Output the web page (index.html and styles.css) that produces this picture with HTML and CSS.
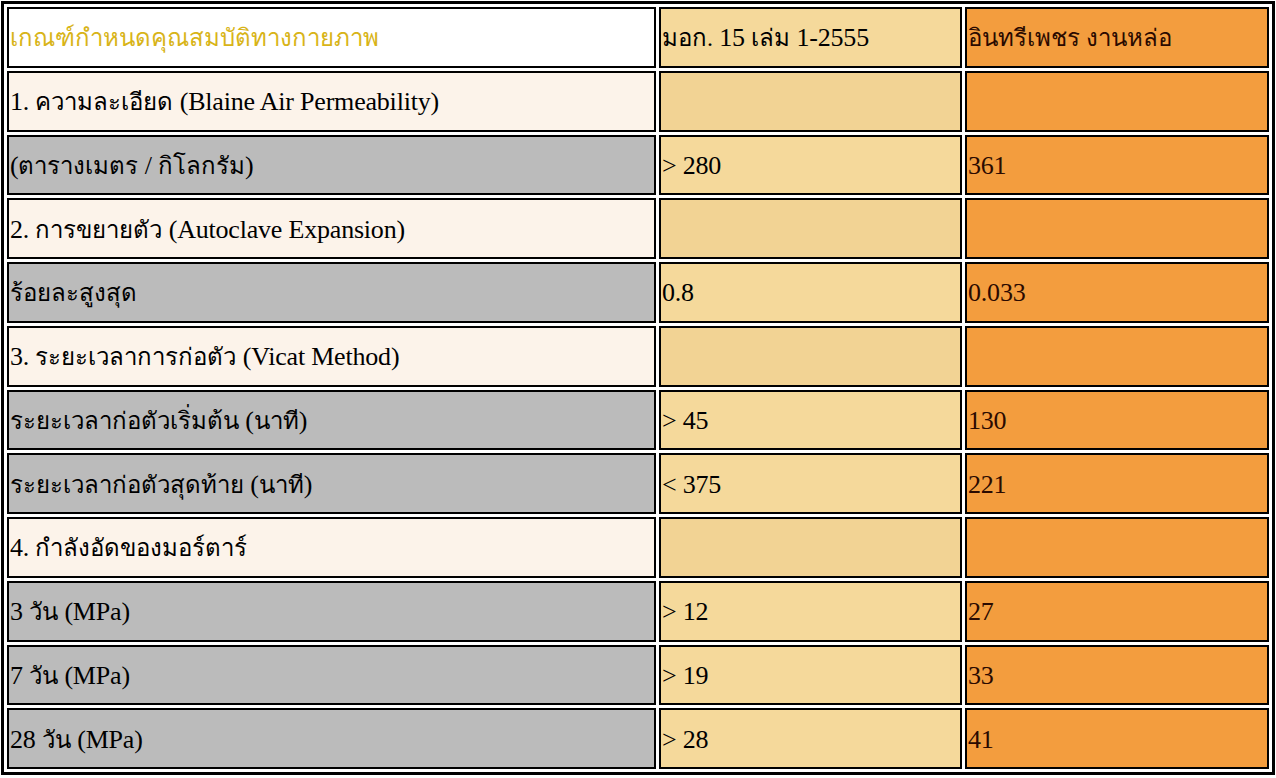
FILE: index.html
```html
<!DOCTYPE html>
<html lang="th">
<head>
<meta charset="utf-8">
<title>เกณฑ์กำหนดคุณสมบัติทางกายภาพ</title>
<link rel="stylesheet" href="styles.css">
</head>
<body>
<table class="spec">
  <colgroup>
    <col class="c1"><col class="c2"><col class="c3">
  </colgroup>
  <tr class="head">
    <td class="name"><span class="th">เกณฑ์กำหนดคุณสมบัติทางกายภาพ</span></td>
    <td class="std"><span class="th">มอก.</span> 15 <span class="th">เล่ม</span> 1-2555</td>
    <td class="val"><span class="th">อินทรีเพชร งานหล่อ</span></td>
  </tr>
  <tr class="section">
    <td class="name">1. <span class="th">ความละเอียด</span> (Blaine Air Permeability)</td>
    <td class="std"></td>
    <td class="val"></td>
  </tr>
  <tr class="data">
    <td class="name">(<span class="th">ตารางเมตร</span> / <span class="th">กิโลกรัม</span>)</td>
    <td class="std">&gt; 280</td>
    <td class="val">361</td>
  </tr>
  <tr class="section">
    <td class="name">2. <span class="th">การขยายตัว</span> (Autoclave Expansion)</td>
    <td class="std"></td>
    <td class="val"></td>
  </tr>
  <tr class="data">
    <td class="name"><span class="th">ร้อยละสูงสุด</span></td>
    <td class="std">0.8</td>
    <td class="val">0.033</td>
  </tr>
  <tr class="section">
    <td class="name">3. <span class="th">ระยะเวลาการก่อตัว</span> (Vicat Method)</td>
    <td class="std"></td>
    <td class="val"></td>
  </tr>
  <tr class="data">
    <td class="name"><span class="th">ระยะเวลาก่อตัวเริ่มต้น</span> (<span class="th">นาที</span>)</td>
    <td class="std">&gt; 45</td>
    <td class="val">130</td>
  </tr>
  <tr class="data">
    <td class="name"><span class="th">ระยะเวลาก่อตัวสุดท้าย</span> (<span class="th">นาที</span>)</td>
    <td class="std">&lt; 375</td>
    <td class="val">221</td>
  </tr>
  <tr class="section">
    <td class="name">4. <span class="th">กำลังอัดของมอร์ตาร์</span></td>
    <td class="std"></td>
    <td class="val"></td>
  </tr>
  <tr class="data">
    <td class="name">3 <span class="th">วัน</span> (MPa)</td>
    <td class="std">&gt; 12</td>
    <td class="val">27</td>
  </tr>
  <tr class="data">
    <td class="name">7 <span class="th">วัน</span> (MPa)</td>
    <td class="std">&gt; 19</td>
    <td class="val">33</td>
  </tr>
  <tr class="data">
    <td class="name">28 <span class="th">วัน</span> (MPa)</td>
    <td class="std">&gt; 28</td>
    <td class="val">41</td>
  </tr>
</table>
</body>
</html>
```
FILE: styles.css
```css
html, body {
  margin: 0;
  padding: 0;
  background: #ffffff;
}
body {
  padding: 1px;
  font-family: "Liberation Serif", "DejaVu Serif", serif;
  font-size: 26px;
  color: #000000;
}
.spec {
  width: 1274px;
  height: 774px;
  border: 3px solid #000000;
  border-spacing: 3px;
  table-layout: fixed;
  box-sizing: border-box;
}
.c1 { width: 649px; }
.c2 { width: 303px; }
.c3 { width: 304px; }
.spec td {
  border: 2px solid #000000;
  padding: 2px 1px 0;
  height: 60.75px;
  box-sizing: border-box;
  vertical-align: middle;
  white-space: nowrap;
  line-height: 1;
  letter-spacing: -0.2px;
}
.th {
  font-size: 24px;
  letter-spacing: 0;
}
.spec .std { background: #f5d99b; }
.spec .val { background: #f39d3e; color: #2a0a00; }
.head .name { background: #ffffff; color: #d8b418; }
.section .name { background: #fcf3ea; }
.section .std { background: #f2d394; }
.data .name { background: #bbbbbb; }
```
